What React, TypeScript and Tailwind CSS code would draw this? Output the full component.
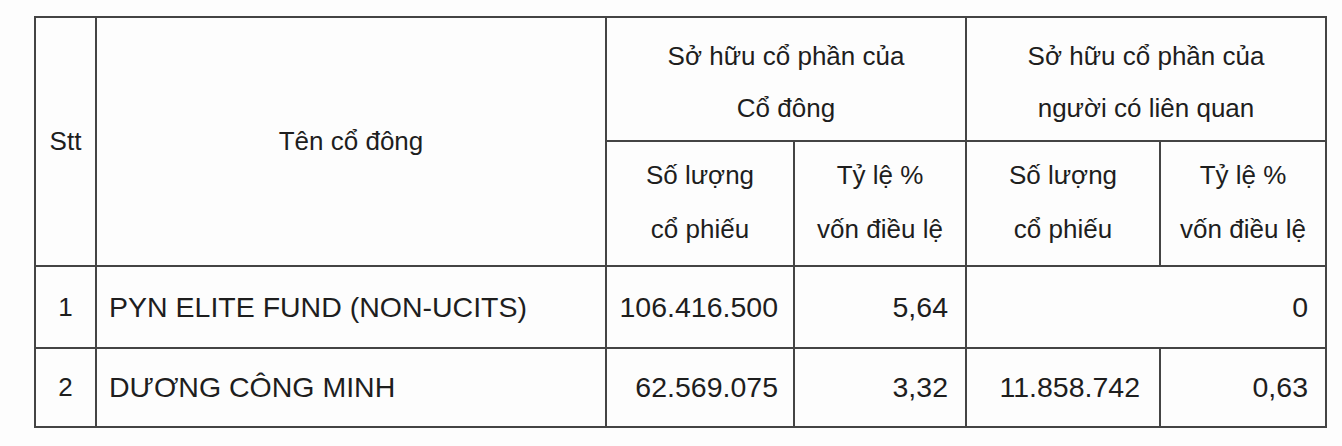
const cell = "border-2 border-[#444] align-middle"
const head = `${cell} font-normal text-center text-[26px]`

const rows = [
  { stt: "1", name: "PYN ELITE FUND (NON-UCITS)", qty: "106.416.500", pct: "5,64", rel: null as null | { qty: string; pct: string }, relMerged: "0" },
  { stt: "2", name: "DƯƠNG CÔNG MINH", qty: "62.569.075", pct: "3,32", rel: { qty: "11.858.742", pct: "0,63" }, relMerged: "" },
]

export default function App() {
  return (
    <div className="min-h-[446px] bg-[#fdfdfd] pl-[34px] pt-[16px] font-['Liberation_Sans',Arial,sans-serif] text-[28.5px] text-[#1e1e1e]">
      <table className="table-fixed border-collapse w-[1291px]">
        <colgroup>
          <col className="w-[61px]" />
          <col className="w-[510px]" />
          <col className="w-[188px]" />
          <col className="w-[172px]" />
          <col className="w-[194px]" />
          <col className="w-[166px]" />
        </colgroup>
        <thead>
          <tr className="h-[124px]">
            <th rowSpan={2} className={head}>Stt</th>
            <th rowSpan={2} className={head}>Tên cổ đông</th>
            <th colSpan={2} className={`${head} leading-[52px] pt-[6px]`}>Sở hữu cổ phần của<br />Cổ đông</th>
            <th colSpan={2} className={`${head} leading-[52px] pt-[6px]`}>Sở hữu cổ phần của<br />người có liên quan</th>
          </tr>
          <tr className="h-[125px]">
            <th className={`${head} leading-[54px] pb-[3px]`}>Số lượng<br />cổ phiếu</th>
            <th className={`${head} leading-[54px] pb-[3px]`}>Tỷ lệ %<br />vốn điều lệ</th>
            <th className={`${head} leading-[54px] pb-[3px]`}>Số lượng<br />cổ phiếu</th>
            <th className={`${head} leading-[54px] pb-[3px]`}>Tỷ lệ %<br />vốn điều lệ</th>
          </tr>
        </thead>
        <tbody>
          {rows.map((r, i) => (
            <tr key={r.stt} className={i === 0 ? "h-[82px]" : "h-[79px]"}>
              <td className={`${cell} text-center text-[26px]`}>{r.stt}</td>
              <td className={`${cell} pl-[12px] whitespace-nowrap`}>{r.name}</td>
              <td className={`${cell} text-right pr-[15px]`}>{r.qty}</td>
              <td className={`${cell} text-right pr-[17px]`}>{r.pct}</td>
              {r.rel ? (
                <>
                  <td className={`${cell} text-right pr-[19px]`}>{r.rel.qty}</td>
                  <td className={`${cell} text-right pr-[17px]`}>{r.rel.pct}</td>
                </>
              ) : (
                <td colSpan={2} className={`${cell} text-right pr-[17px]`}>{r.relMerged}</td>
              )}
            </tr>
          ))}
        </tbody>
      </table>
    </div>
  )
}
